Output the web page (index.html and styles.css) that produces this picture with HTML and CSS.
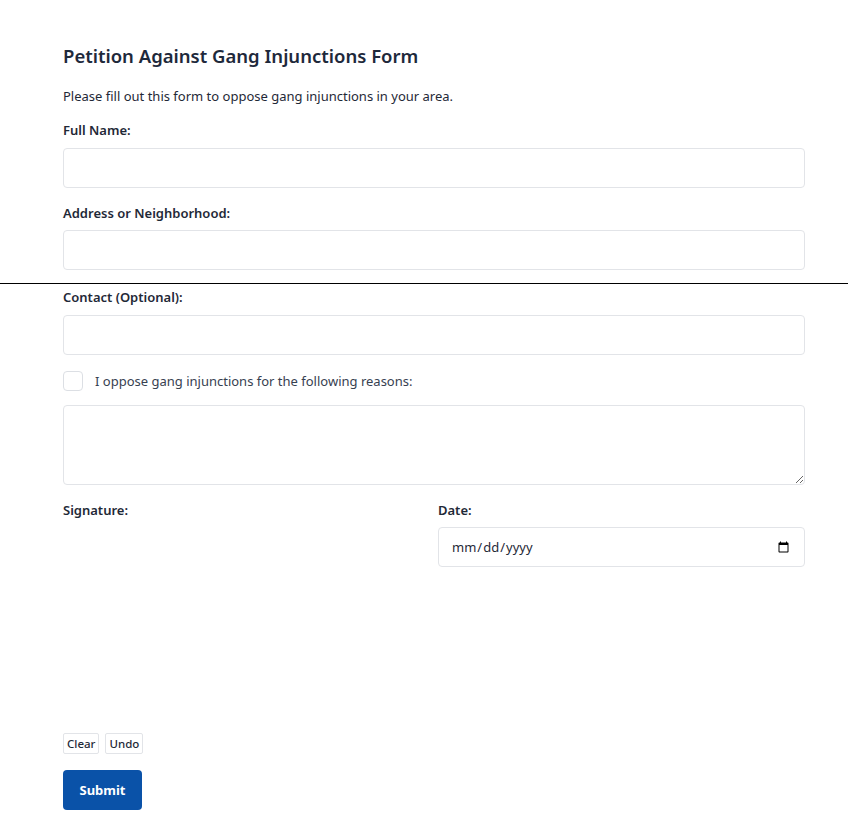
FILE: index.html
```html
<!DOCTYPE html>
<html lang="en">
<head>
<meta charset="utf-8">
<title>Petition Against Gang Injunctions Form</title>
<link rel="stylesheet" href="styles.css">
</head>
<body>
<main class="page">
  <h1 class="title">Petition Against Gang Injunctions Form</h1>
  <p class="intro">Please fill out this form to oppose gang injunctions in your area.</p>
  <form class="form">
    <div class="field">
      <label class="label" for="name">Full Name:</label>
      <input class="input" id="name" type="text">
    </div>
    <div class="field">
      <label class="label" for="addr">Address or Neighborhood:</label>
      <input class="input" id="addr" type="text">
    </div>
    <div class="rule"></div>
    <div class="field">
      <label class="label" for="contact">Contact (Optional):</label>
      <input class="input" id="contact" type="text">
    </div>
    <div class="check-row">
      <input class="check" id="oppose" type="checkbox">
      <label class="check-label" for="oppose">I oppose gang injunctions for the following reasons:</label>
    </div>
    <textarea class="textarea" rows="3"></textarea>
    <div class="two-col">
      <div class="col">
        <span class="label">Signature:</span>
        <div class="sig-pad"></div>
        <div class="sig-buttons">
          <button type="button" class="small-btn">Clear</button>
          <button type="button" class="small-btn">Undo</button>
        </div>
      </div>
      <div class="col">
        <label class="label" for="date">Date:</label>
        <input class="input date" id="date" type="date">
      </div>
    </div>
    <button type="submit" class="submit">Submit</button>
  </form>
</main>
</body>
</html>
```
FILE: styles.css
```css
* { box-sizing: border-box; }
html, body { margin: 0; padding: 0; background: #fff; }
body {
  font-family: "Noto Sans", "Open Sans", sans-serif;
  color: #1f2937;
}
.page {
  padding: 41px 43px 20px 63px;
}
.title {
  margin: 0;
  font-size: 18.5px;
  font-weight: 600;
  color: #1e293b;
  line-height: 30px;
}
.intro {
  margin: 16px 0 0;
  font-size: 13px;
  line-height: 18px;
}
.form { margin-top: 16px; }
.field { display: flex; flex-direction: column; margin-bottom: 16px; }
.label {
  display: block;
  font-size: 13px;
  font-weight: 600;
  line-height: 18px;
  margin-bottom: 8.5px;
  color: #1f2937;
}
.input {
  height: 40px;
  width: 100%;
  border: 1px solid #e2e4e8;
  border-radius: 4px;
  padding: 0 12px;
  font-family: inherit;
  font-size: 13px;
  color: #1f2937;
  background: #fff;
}
.rule {
  height: 1px;
  background: #000;
  margin: -3px -43px 4px -63px;
}
.check-row { display: flex; align-items: center; gap: 12px; margin: 0 0 14px; }
.check {
  appearance: none;
  margin: 0;
  width: 20px;
  height: 20px;
  border: 1px solid #dcdfe4;
  border-radius: 4px;
  background: #fff;
}
.check-label { font-size: 13px; line-height: 20px; color: #374151; }
.textarea {
  display: block;
  width: 100%;
  height: 80px;
  border: 1px solid #e2e4e8;
  border-radius: 4px;
  padding: 8px 12px;
  font-family: inherit;
  font-size: 13px;
  resize: vertical;
}
.two-col {
  display: grid;
  grid-template-columns: 1fr 1fr;
  gap: 8px;
  margin-top: 16px;
}
.col { display: flex; flex-direction: column; }
.sig-pad { height: 206px; }
.sig-buttons { display: flex; gap: 6px; margin-top: 0; }
.small-btn {
  font-family: inherit;
  font-size: 11.5px;
  font-weight: 500;
  color: #1f2937;
  background: #fff;
  border: 1px solid #e2e4e8;
  border-radius: 2px;
  height: 21px;
  padding: 0 3px;
}
.date { color: #1f2937; }
.submit {
  margin-top: 16px;
  width: 79px;
  height: 40px;
  border: none;
  border-radius: 4px;
  background: #0a52a8;
  color: #fff;
  font-family: inherit;
  font-size: 13px;
  font-weight: 700;
}
```
